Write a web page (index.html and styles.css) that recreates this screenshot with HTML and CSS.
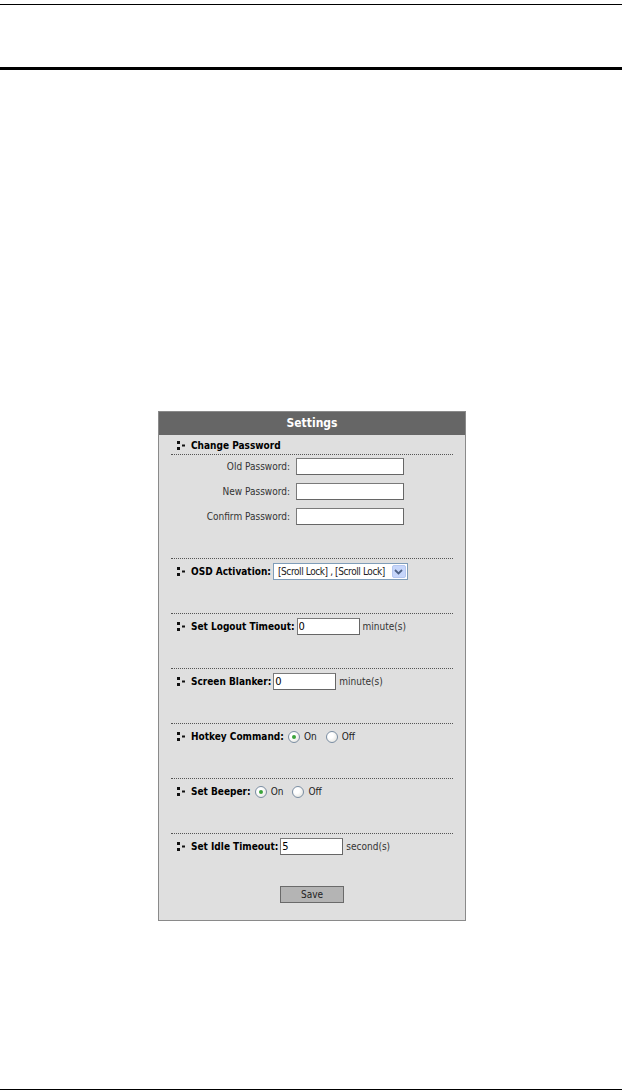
FILE: index.html
```html
<!DOCTYPE html>
<html lang="en">
<head>
    <meta charset="UTF-8">
    <meta name="viewport" content="width=device-width, initial-scale=1.0">
    <title>Settings</title>
    <link rel="stylesheet" href="styles.css">
</head>
<body>
    <div class="page">
        <div class="top-rule"></div>

        <div class="panel">
            <div class="panel-head">Settings</div>

            <div class="title-row">
                <span class="bullet"><svg width="8" height="9" viewBox="0 0 8 9"><rect x="0" y="0" width="3" height="3"/><rect x="0" y="6" width="3" height="3"/><rect x="5" y="3.5" width="3" height="2"/></svg></span>
                <span class="title">Change Password</span>
            </div>
            <div class="rule"></div>
            <div class="pw-grid">
                <label class="pw-label">Old Password:</label>
                <input class="field pw-field" type="password">
                <label class="pw-label">New Password:</label>
                <input class="field pw-field" type="password">
                <label class="pw-label">Confirm Password:</label>
                <input class="field pw-field" type="password">
            </div>

            <div class="rule"></div>
            <div class="row">
                <span class="bullet"><svg width="8" height="9" viewBox="0 0 8 9"><rect x="0" y="0" width="3" height="3"/><rect x="0" y="6" width="3" height="3"/><rect x="5" y="3.5" width="3" height="2"/></svg></span>
                <span class="title">OSD Activation:</span>
                <div class="select">
                    <span class="select-text">[Scroll Lock] , [Scroll Lock]</span>
                    <span class="select-btn"><svg width="9" height="6" viewBox="0 0 9 6"><path d="M1 1 L4.5 4.5 L8 1" fill="none" stroke="#4d6185" stroke-width="1.8"/></svg></span>
                </div>
            </div>

            <div class="rule"></div>
            <div class="row">
                <span class="bullet"><svg width="8" height="9" viewBox="0 0 8 9"><rect x="0" y="0" width="3" height="3"/><rect x="0" y="6" width="3" height="3"/><rect x="5" y="3.5" width="3" height="2"/></svg></span>
                <span class="title">Set Logout Timeout:</span>
                <input class="field num-field" type="text" value="0">
                <span class="unit">minute(s)</span>
            </div>

            <div class="rule"></div>
            <div class="row">
                <span class="bullet"><svg width="8" height="9" viewBox="0 0 8 9"><rect x="0" y="0" width="3" height="3"/><rect x="0" y="6" width="3" height="3"/><rect x="5" y="3.5" width="3" height="2"/></svg></span>
                <span class="title">Screen Blanker:</span>
                <input class="field num-field" type="text" value="0">
                <span class="unit">minute(s)</span>
            </div>

            <div class="rule"></div>
            <div class="row">
                <span class="bullet"><svg width="8" height="9" viewBox="0 0 8 9"><rect x="0" y="0" width="3" height="3"/><rect x="0" y="6" width="3" height="3"/><rect x="5" y="3.5" width="3" height="2"/></svg></span>
                <span class="title">Hotkey Command:</span>
                <span class="radio checked"></span><span class="radio-label">On</span>
                <span class="radio"></span><span class="radio-label">Off</span>
            </div>

            <div class="rule"></div>
            <div class="row">
                <span class="bullet"><svg width="8" height="9" viewBox="0 0 8 9"><rect x="0" y="0" width="3" height="3"/><rect x="0" y="6" width="3" height="3"/><rect x="5" y="3.5" width="3" height="2"/></svg></span>
                <span class="title">Set Beeper:</span>
                <span class="radio checked"></span><span class="radio-label">On</span>
                <span class="radio"></span><span class="radio-label">Off</span>
            </div>

            <div class="rule"></div>
            <div class="row last">
                <span class="bullet"><svg width="8" height="9" viewBox="0 0 8 9"><rect x="0" y="0" width="3" height="3"/><rect x="0" y="6" width="3" height="3"/><rect x="5" y="3.5" width="3" height="2"/></svg></span>
                <span class="title">Set Idle Timeout:</span>
                <input class="field num-field" type="text" value="5">
                <span class="unit">second(s)</span>
            </div>

            <div class="actions">
                <button class="btn">Save</button>
            </div>
        </div>

        <div class="bottom-rule"></div>
    </div>
</body>
</html>
```

FILE: styles.css
```css
body {
    margin: 0;
    background: #fff;
    font-family: "DejaVu Sans Condensed", "DejaVu Sans", sans-serif;
    font-stretch: condensed;
    font-size: 10px;
    color: #222;
}

.page {
    width: 624px;
    height: 1090px;
    display: flex;
    flex-direction: column;
}

.top-rule {
    margin: 4px 2px 0 0;
    height: 62px;
    border-top: 1px solid #000;
    border-bottom: 3px solid #000;
}

.bottom-rule {
    margin: auto 2px 0 0;
    border-bottom: 1px solid #000;
}

.panel {
    width: 306px;
    margin: 341px auto 0;
    border: 1px solid #8a8a8a;
    background: #dfdfdf;
}

.panel-head {
    height: 23px;
    line-height: 23px;
    background: #666;
    color: #fff;
    font-weight: bold;
    font-size: 12px;
    text-align: center;
}

.title-row {
    display: flex;
    align-items: center;
    box-sizing: border-box;
    height: 19px;
    padding: 2px 0 0 18px;
}

.bullet {
    display: flex;
    width: 8px;
    margin-right: 6px;
    fill: #111;
}

.title {
    font-weight: bold;
    color: #000;
    margin-right: 2px;
}

.rule {
    margin: 0 12px;
    border-top: 1px dotted #555;
}

.pw-grid {
    display: grid;
    grid-template-columns: 131px 108px;
    column-gap: 6px;
    row-gap: 8px;
    align-items: center;
    margin: 3px 0 33px;
}

.pw-label {
    justify-self: end;
    color: #333;
}

.field {
    box-sizing: border-box;
    height: 17px;
    margin: 0;
    padding: 0 1px;
    border: 1px solid #666;
    border-top-color: #7a7a7a;
    border-left-color: #7a7a7a;
    background: #fff;
    font-family: inherit;
    font-size: 11px;
    color: #000;
    outline: none;
}

.pw-field {
    width: 108px;
}

.num-field {
    width: 63px;
}

.row {
    display: flex;
    align-items: center;
    height: 17px;
    padding: 4px 0 33px 18px;
}

.row.last {
    padding-bottom: 0;
}

.unit {
    margin-left: 3px;
    color: #333;
}

.select {
    display: flex;
    align-items: center;
    justify-content: space-between;
    box-sizing: border-box;
    width: 135px;
    height: 17px;
    border: 1px solid #7f9db9;
    background: #fff;
}

.select-text {
    padding-left: 4px;
    white-space: nowrap;
    letter-spacing: -0.4px;
    color: #222;
}

.select-btn {
    display: flex;
    align-items: center;
    justify-content: center;
    box-sizing: border-box;
    width: 14px;
    height: 13px;
    margin-right: 1px;
    border: 1px solid #b5c7f0;
    border-radius: 2px;
    background: #c6d6fb;
}

.radio {
    position: relative;
    box-sizing: border-box;
    width: 12px;
    height: 12px;
    margin: 0 4px 0 2px;
    border: 1px solid #7b8ea3;
    border-radius: 50%;
    background: radial-gradient(circle at 35% 35%, #fff 30%, #dcdcd6 100%);
}

.radio.checked::after {
    content: "";
    position: absolute;
    left: 3px;
    top: 3px;
    width: 4px;
    height: 4px;
    border-radius: 50%;
    background: #3aa33a;
}

.radio-label {
    margin-right: 7px;
    color: #222;
}

.actions {
    display: flex;
    justify-content: center;
    padding: 31px 0 17px;
}

.btn {
    width: 64px;
    height: 17px;
    padding: 0;
    border: 1px solid #6a6a6a;
    background: #b4b4b4;
    font-family: inherit;
    font-size: 10px;
    color: #222;
}
```
